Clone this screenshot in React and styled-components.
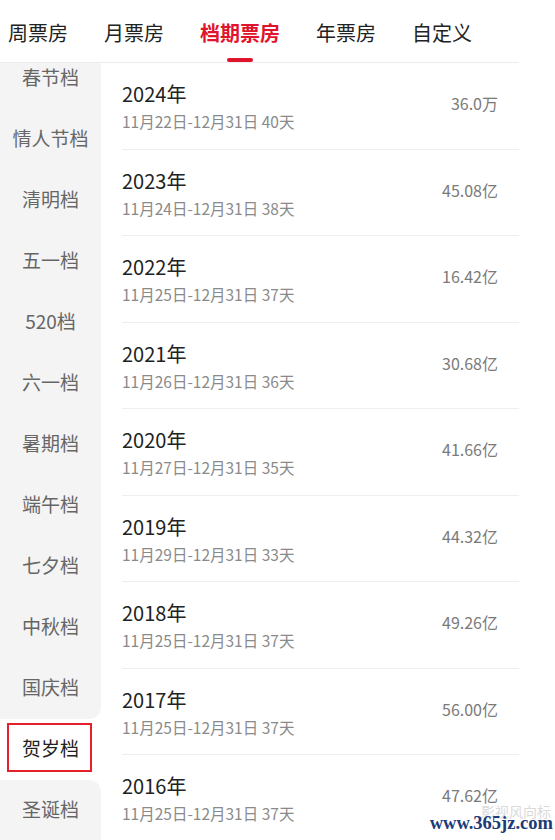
import React from "react";
import styled, { createGlobalStyle } from "styled-components";

const GlobalStyle = createGlobalStyle`
  html, body {
    margin: 0;
    padding: 0;
    background: #fff;
  }
  body {
    font-family: "Noto Sans CJK SC", "Noto Sans", sans-serif;
  }
`;

const Page = styled.div`
  position: relative;
  width: 555px;
  height: 840px;
  overflow: hidden;
  background: #fff;
`;

const Main = styled.div`
  width: 519px;
`;

const TabBar = styled.div`
  display: flex;
  align-items: center;
  gap: 36px;
  height: 62px;
  padding-left: 8px;
  border-bottom: 1px solid #ececec;
`;

const Tab = styled.div`
  position: relative;
  height: 62px;
  display: flex;
  align-items: center;
  padding-top: 3px;
  box-sizing: border-box;
  font-size: 20px;
  white-space: nowrap;
  color: ${(p) => (p.$active ? "#e0142c" : "#222")};
  font-weight: ${(p) => (p.$active ? 700 : 400)};
`;

const Underline = styled.span`
  position: absolute;
  left: 50%;
  bottom: 0;
  width: 26px;
  height: 4px;
  margin-left: -13px;
  border-radius: 2px;
  background: #e0142c;
`;

const Body = styled.div`
  display: flex;
  height: 777px;
  overflow: hidden;
`;

const Sidebar = styled.div`
  width: 101px;
  flex-shrink: 0;
  background: #fff;
  overflow: hidden;
`;

const SideList = styled.div`
  margin-top: -15.5px;
`;

const SideItem = styled.div`
  position: relative;
  height: 61px;
  display: flex;
  align-items: center;
  justify-content: center;
  padding-bottom: 4px;
  box-sizing: border-box;
  font-size: 19px;
  color: ${(p) => (p.$active ? "#222" : "#666")};
  background: ${(p) => (p.$active ? "#fff" : "#f4f4f4")};
  border-bottom-right-radius: ${(p) => (p.$before ? "12px" : "0")};
  border-top-right-radius: ${(p) => (p.$after ? "12px" : "0")};

  ${(p) =>
    p.$active &&
    `
    &::after {
      content: "";
      position: absolute;
      left: 7px;
      right: 9px;
      top: 4.5px;
      bottom: 7.5px;
      border: 2px solid #e3202b;
    }
  `}
`;

const List = styled.div`
  flex: 1;
  padding-left: 21px;
`;

const Row = styled.div`
  display: flex;
  justify-content: space-between;
  height: 86.5px;
  box-sizing: border-box;
  padding-right: 21px;
  border-bottom: 1px solid #efefef;
`;

const Info = styled.div`
  display: flex;
  flex-direction: column;
  padding-top: 19px;
`;

const Year = styled.div`
  font-size: 20px;
  line-height: 24px;
  color: #222;
`;

const Range = styled.div`
  margin-top: 5px;
  font-size: 15.5px;
  line-height: 20px;
  color: #8a8a8a;
`;

const Amount = styled.div`
  align-self: center;
  margin-bottom: 5px;
  font-size: 16px;
  color: #7a7a7a;
`;

const Watermark = styled.div`
  position: absolute;
  right: 2px;
  bottom: 7px;
  text-align: right;
`;

const WatermarkFaint = styled.div`
  font-size: 14px;
  line-height: 14px;
  color: #dadada;
  margin-right: 2px;
  margin-bottom: -5px;
`;

const WatermarkSite = styled.div`
  position: relative;
  font-family: "Liberation Serif", "DejaVu Serif", serif;
  font-weight: 700;
  font-size: 18.5px;
  line-height: 20px;
  color: #1c3a78;
`;

const tabs = ["周票房", "月票房", "档期票房", "年票房", "自定义"];

const seasons = [
  "春节档",
  "情人节档",
  "清明档",
  "五一档",
  "520档",
  "六一档",
  "暑期档",
  "端午档",
  "七夕档",
  "中秋档",
  "国庆档",
  "贺岁档",
  "圣诞档",
];

const selected = 11;

const rows = [
  { year: "2024年", range: "11月22日-12月31日 40天", amount: "36.0万" },
  { year: "2023年", range: "11月24日-12月31日 38天", amount: "45.08亿" },
  { year: "2022年", range: "11月25日-12月31日 37天", amount: "16.42亿" },
  { year: "2021年", range: "11月26日-12月31日 36天", amount: "30.68亿" },
  { year: "2020年", range: "11月27日-12月31日 35天", amount: "41.66亿" },
  { year: "2019年", range: "11月29日-12月31日 33天", amount: "44.32亿" },
  { year: "2018年", range: "11月25日-12月31日 37天", amount: "49.26亿" },
  { year: "2017年", range: "11月25日-12月31日 37天", amount: "56.00亿" },
  { year: "2016年", range: "11月25日-12月31日 37天", amount: "47.62亿" },
];

const App = () => {
  return (
    <>
      <GlobalStyle />
      <Page>
        <Main>
          <TabBar>
            {tabs.map((t, i) => (
              <Tab key={t} $active={i === 2}>
                {t}
                {i === 2 && <Underline />}
              </Tab>
            ))}
          </TabBar>
          <Body>
            <Sidebar>
              <SideList>
                {seasons.map((s, i) => (
                  <SideItem
                    key={s}
                    $active={i === selected}
                    $before={i === selected - 1}
                    $after={i === selected + 1}
                  >
                    {s}
                  </SideItem>
                ))}
              </SideList>
            </Sidebar>
            <List>
              {rows.map((r) => (
                <Row key={r.year}>
                  <Info>
                    <Year>{r.year}</Year>
                    <Range>{r.range}</Range>
                  </Info>
                  <Amount>{r.amount}</Amount>
                </Row>
              ))}
            </List>
          </Body>
        </Main>
        <Watermark>
          <WatermarkFaint>影视风向标</WatermarkFaint>
          <WatermarkSite>www.365jz.com</WatermarkSite>
        </Watermark>
      </Page>
    </>
  );
};

export default App;
